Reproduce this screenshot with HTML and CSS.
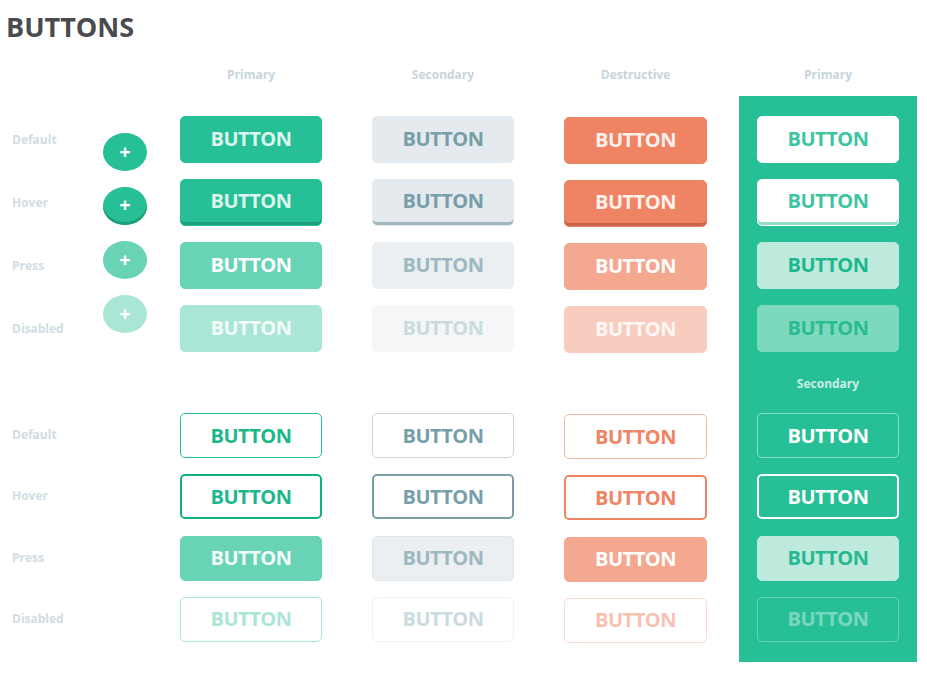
FILE: index.html
```html
<!DOCTYPE html>
<html lang="en">
<head>
<meta charset="utf-8">
<title>Buttons</title>
<link rel="stylesheet" href="styles.css">
</head>
<body>
<div class="page">
  <h1 class="title">BUTTONS</h1>
  <div class="board">
    <div class="col col-labels">
      <div class="head"></div>
      <div class="body">
        <div class="group g1">
          <div class="slot label">Default</div>
          <div class="slot label">Hover</div>
          <div class="slot label">Press</div>
          <div class="slot label">Disabled</div>
        </div>
        <div class="divider"></div>
        <div class="group g2">
          <div class="slot label">Default</div>
          <div class="slot label">Hover</div>
          <div class="slot label">Press</div>
          <div class="slot label">Disabled</div>
        </div>
      </div>
    </div>

    <div class="col col-fab">
      <div class="head"></div>
      <div class="body">
        <div class="fabs">
          <div class="fab fab-default">+</div>
          <div class="fab fab-hover">+</div>
          <div class="fab fab-press">+</div>
          <div class="fab fab-disabled">+</div>
        </div>
      </div>
    </div>

    <div class="col col-btn col-primary">
      <div class="head">Primary</div>
      <div class="body">
        <div class="group g1">
          <div class="slot"><div class="btn p-default">BUTTON</div></div>
          <div class="slot"><div class="btn p-hover">BUTTON</div></div>
          <div class="slot"><div class="btn p-press">BUTTON</div></div>
          <div class="slot"><div class="btn p-disabled">BUTTON</div></div>
        </div>
        <div class="divider"></div>
        <div class="group g2">
          <div class="slot"><div class="btn po-default">BUTTON</div></div>
          <div class="slot"><div class="btn po-hover">BUTTON</div></div>
          <div class="slot"><div class="btn po-press">BUTTON</div></div>
          <div class="slot"><div class="btn po-disabled">BUTTON</div></div>
        </div>
      </div>
    </div>

    <div class="col col-btn col-secondary">
      <div class="head">Secondary</div>
      <div class="body">
        <div class="group g1">
          <div class="slot"><div class="btn s-default">BUTTON</div></div>
          <div class="slot"><div class="btn s-hover">BUTTON</div></div>
          <div class="slot"><div class="btn s-press">BUTTON</div></div>
          <div class="slot"><div class="btn s-disabled">BUTTON</div></div>
        </div>
        <div class="divider"></div>
        <div class="group g2">
          <div class="slot"><div class="btn so-default">BUTTON</div></div>
          <div class="slot"><div class="btn so-hover">BUTTON</div></div>
          <div class="slot"><div class="btn so-press">BUTTON</div></div>
          <div class="slot"><div class="btn so-disabled">BUTTON</div></div>
        </div>
      </div>
    </div>

    <div class="col col-btn col-destructive">
      <div class="head">Destructive</div>
      <div class="body">
        <div class="group g1">
          <div class="slot"><div class="btn d-default">BUTTON</div></div>
          <div class="slot"><div class="btn d-hover">BUTTON</div></div>
          <div class="slot"><div class="btn d-press">BUTTON</div></div>
          <div class="slot"><div class="btn d-disabled">BUTTON</div></div>
        </div>
        <div class="divider"></div>
        <div class="group g2">
          <div class="slot"><div class="btn do-default">BUTTON</div></div>
          <div class="slot"><div class="btn do-hover">BUTTON</div></div>
          <div class="slot"><div class="btn do-press">BUTTON</div></div>
          <div class="slot"><div class="btn do-disabled">BUTTON</div></div>
        </div>
      </div>
    </div>

    <div class="col col-panel">
      <div class="head">Primary</div>
      <div class="body panel">
        <div class="group g1">
          <div class="slot"><div class="btn i-default">BUTTON</div></div>
          <div class="slot"><div class="btn i-hover">BUTTON</div></div>
          <div class="slot"><div class="btn i-press">BUTTON</div></div>
          <div class="slot"><div class="btn i-disabled">BUTTON</div></div>
        </div>
        <div class="divider"><span class="panel-sub">Secondary</span></div>
        <div class="group g2">
          <div class="slot"><div class="btn io-default">BUTTON</div></div>
          <div class="slot"><div class="btn io-hover">BUTTON</div></div>
          <div class="slot"><div class="btn io-press">BUTTON</div></div>
          <div class="slot"><div class="btn io-disabled">BUTTON</div></div>
        </div>
      </div>
    </div>
  </div>
</div>
</body>
</html>
```

FILE: styles.css
```css
* { box-sizing: border-box; }

html, body {
  margin: 0;
  padding: 0;
  background: #ffffff;
  font-family: "Open Sans", "Liberation Sans", sans-serif;
}

.page {
  width: 927px;
}

.title {
  margin: 0;
  padding: 12px 0 0 6px;
  height: 42px;
  font-size: 27px;
  line-height: 30px;
  font-weight: 700;
  color: #4a4b4f;
  letter-spacing: 0;
}

.board {
  display: flex;
  margin-top: 22px;
}

.col {
  display: flex;
  flex-direction: column;
}

.head {
  height: 20px;
  line-height: 20px;
  padding-top: 1px;
  margin-bottom: 12px;
  text-align: center;
  font-size: 12px;
  font-weight: 700;
  color: #c6d5dc;
}

.body {
  padding: 20px 0 20px;
}

.group {
  display: flex;
  flex-direction: column;
}

.g1 { gap: 16px; }
.g1 .slot { height: 47px; }

.g2 { gap: 16.33px; }
.g2 .slot { height: 45px; }

.divider {
  height: 61px;
  display: flex;
  justify-content: center;
  padding-top: 23px;
}

.slot {
  display: flex;
}

/* columns */
.col-labels { width: 103px; }
.col-fab { width: 44px; margin-right: 33px; }
.col-primary { width: 142px; margin-right: 50px; }
.col-secondary { width: 142px; margin-right: 50px; }
.col-destructive { width: 143px; margin-right: 32px; }
.col-destructive .group { margin-top: 1px; margin-bottom: -1px; }
.col-panel { width: 178px; }

.label {
  align-items: center;
  padding: 0 0 0 12px;
  font-size: 12px;
  font-weight: 700;
  color: #d0dde3;
}

.g2 .label { padding-bottom: 2px; }

/* floating round buttons */
.fabs {
  display: flex;
  flex-direction: column;
  gap: 16px;
  padding-top: 17px;
}

.fab {
  width: 44px;
  height: 38px;
  border-radius: 50%;
  display: flex;
  align-items: center;
  justify-content: center;
  color: #ffffff;
  font-size: 20px;
  font-weight: 700;
  line-height: 1;
}

.fab-default { background: #27bf95; }
.fab-hover { background: #27bf95; box-shadow: inset 0 -3px 0 #1d9f7b; padding-bottom: 2px; }
.fab-press { background: #68d3b5; }
.fab-disabled { background: #aae6d6; }

/* generic button */
.btn {
  width: 100%;
  height: 100%;
  border-radius: 5px;
  display: flex;
  align-items: center;
  justify-content: center;
  font-size: 20px;
  font-weight: 700;
  line-height: 1;
  letter-spacing: -0.5px;
  padding-bottom: 2px;
  border: 1px solid transparent;
}

.g2 .btn { padding-bottom: 0; }

/* primary filled */
.p-default { background: #27bf95; border-color: #27bf95; color: #dcf6ee; }
.p-hover { background: #27bf95; border-color: #27bf95; color: #dcf6ee; box-shadow: inset 0 -3px 0 #1e9f7b; padding-bottom: 4px; }
.p-press { background: #68d3b5; border-color: #68d3b5; color: #ffffff; }
.p-disabled { background: #aae6d6; border-color: #aae6d6; color: #f3fcf9; }

/* primary outline */
.po-default { background: #fff; border-color: #27bf95; color: #1db78b; }
.po-hover { background: #fff; border: 2px solid #13b283; color: #1db78b; }
.po-press { background: #68d3b5; border-color: #68d3b5; color: #f2fcf8; }
.po-disabled { background: #fff; border-color: #aae6d6; color: #aae6d6; }

/* secondary filled */
.s-default { background: #e4eaed; border-color: #e4eaed; color: #779ea9; }
.s-hover { background: #e4eaed; border-color: #e4eaed; color: #779ea9; box-shadow: inset 0 -3px 0 #9fb8c0; padding-bottom: 4px; }
.s-press { background: #ebeff1; border-color: #ebeff1; color: #9db8c0; }
.s-disabled { background: #f4f6f7; border-color: #f4f6f7; color: #c9dbe0; }

/* secondary outline */
.so-default { background: #fff; border-color: #c9d7dc; color: #779ea9; }
.so-hover { background: #fff; border: 2px solid #7b9fa9; color: #779ea9; }
.so-press { background: #ebeff1; border-color: #dfe6ea; color: #9db8c0; }
.so-disabled { background: #fff; border-color: #eef2f4; color: #c9dbe0; }

/* destructive filled */
.d-default { background: #ef8465; border-color: #ef8465; color: #fff1ec; }
.d-hover { background: #ef8465; border-color: #ef8465; color: #fff1ec; box-shadow: inset 0 -3px 0 #c8654b; padding-bottom: 4px; }
.d-press { background: #f4a890; border-color: #f4a890; color: #ffffff; }
.d-disabled { background: #f8cdc0; border-color: #f8cdc0; color: #fff8f5; }

/* destructive outline */
.do-default { background: #fff; border-color: #f6b6a3; color: #ef8465; }
.do-hover { background: #fff; border: 2px solid #ef8465; color: #ef8465; }
.do-press { background: #f4a890; border-color: #f4a890; color: #ffffff; }
.do-disabled { background: #fff; border-color: #fbdad0; color: #f7c1b1; }

/* inverse panel */
.panel {
  background: #27bf95;
  padding-left: 18px;
  padding-right: 18px;
}

.panel-sub {
  font-size: 12px;
  font-weight: 700;
  line-height: 18px;
  color: #cbeee3;
}

.i-default { background: #ffffff; border-color: #ffffff; color: #3cc59f; }
.i-hover { background: #ffffff; border-color: #ffffff; color: #3cc59f; box-shadow: inset 0 -3px 0 #93dcc7; padding-bottom: 4px; }
.i-press { background: #bdeadd; border-color: #bdeadd; color: #1eb78b; }
.i-disabled { background: #7cd9be; border-color: #7cd9be; color: #2bbb91; }

.io-default { background: transparent; border-color: rgba(255,255,255,0.45); color: #ffffff; }
.io-hover { background: transparent; border: 2px solid #ffffff; color: #ffffff; }
.io-press { background: #bdeadd; border-color: #bdeadd; color: #27b88f; }
.io-disabled { background: transparent; border-color: rgba(255,255,255,0.3); color: rgba(255,255,255,0.4); }
```
